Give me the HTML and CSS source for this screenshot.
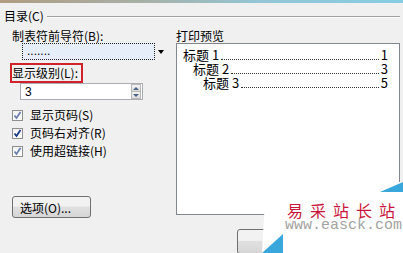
FILE: index.html
```html
<!DOCTYPE html>
<html lang="zh-CN">
<head>
  <meta charset="UTF-8">
  <title>目录</title>
  <link rel="stylesheet" href="styles.css">
</head>
<body>
  <div class="topbar"></div>
  <div class="dialog">
    <div class="group-title"><span>目录(C)</span><span class="rule"></span></div>

    <div class="columns">
      <div class="left">
        <div class="label">制表符前导符(B):</div>
        <div class="select-row">
          <div class="select">.......</div>
          <span class="arrow"></span>
        </div>

        <div class="label boxed">显示级别(L):</div>
        <div class="spin">
          <span class="spin-value">3</span>
          <div class="spin-btns">
            <span class="spin-up"></span>
            <span class="spin-down"></span>
          </div>
        </div>

        <div class="checks">
          <div class="check"><span class="box"><svg width="9" height="9" viewBox="0 0 9 9"><path d="M1.5 4.5 L3.5 7 L7.5 1" fill="none" stroke="#6b7fae" stroke-width="1.8"/></svg></span>显示页码(S)</div>
          <div class="check"><span class="box"><svg width="9" height="9" viewBox="0 0 9 9"><path d="M1.5 4.5 L3.5 7 L7.5 1" fill="none" stroke="#1c3a8c" stroke-width="1.8"/></svg></span>页码右对齐(R)</div>
          <div class="check"><span class="box"><svg width="9" height="9" viewBox="0 0 9 9"><path d="M1.5 4.5 L3.5 7 L7.5 1" fill="none" stroke="#6b7fae" stroke-width="1.8"/></svg></span>使用超链接(H)</div>
        </div>

        <button class="options">选项(O)...</button>
      </div>

      <div class="right">
        <div class="label">打印预览</div>
        <div class="preview">
          <div class="toc-row"><span>标题 1</span><span class="leader"></span><span>1</span></div>
          <div class="toc-row level2"><span>标题 2</span><span class="leader"></span><span>3</span></div>
          <div class="toc-row level3"><span>标题 3</span><span class="leader"></span><span>5</span></div>
        </div>
      </div>
    </div>

    <div class="footer">
      <button class="ok"></button>
    </div>
  </div>

  <!-- site watermark pasted over the corner -->
  <div class="watermark">
    <svg class="wm-bg" width="141" height="71" viewBox="0 0 141 71">
      <polygon points="4,0 141,0 141,71 0,71" fill="#ffffff"/>
      <polygon points="118,10 141,0 141,10" fill="#3aa7dc"/>
      <polygon points="0,71 21,52 21,71" fill="#3aa7dc"/>
    </svg>
    <div class="wm-title">易采站长站</div>
    <div class="wm-url">www.easck.com</div>
  </div>
</body>
</html>
```

FILE: styles.css
```css
* {
  box-sizing: border-box;
}

body {
  margin: 0;
  width: 403px;
  height: 253px;
  overflow: hidden;
  position: relative;
  background-color: #f0f0f0;
  font-family: "Noto Sans CJK SC", sans-serif;
  font-size: 12px;
  color: #000;
}

.topbar {
  height: 3px;
  background: linear-gradient(to right, #b09c82, #a7b0a6 35%, #93c6d6 65%, #86cde2);
}

.dialog {
  padding: 6px 0 0 4px;
}

.group-title {
  display: flex;
  align-items: center;
  height: 14px;
  line-height: 14px;
}

.group-title .rule {
  flex: 1;
  height: 1px;
  margin: 1px 3px 0 3px;
  background-color: #a0a0a0;
  box-shadow: 0 1px 0 #fff;
}

.columns {
  display: flex;
}

.left {
  width: 172px;
  padding-left: 8px;
}

.label {
  margin-top: 6px;
  height: 14px;
  line-height: 14px;
  white-space: nowrap;
}

.select-row {
  display: flex;
  align-items: center;
  margin-left: 10px;
  height: 17px;
}

.select {
  width: 133px;
  height: 17px;
  border: 1px dotted #222;
  background-color: #e6eefa;
  padding-left: 4px;
  line-height: 14px;
  font-family: "Liberation Sans", sans-serif;
  font-size: 12px;
}

.arrow {
  margin-left: 3px;
  width: 0;
  height: 0;
  border-left: 3px solid transparent;
  border-right: 3px solid transparent;
  border-top: 4px solid #000;
}

.boxed {
  margin-top: 3px;
  margin-left: -2px;
  width: 73px;
  height: 20px;
  line-height: 16px;
  border: 2px solid #d0222b;
}

.spin {
  display: flex;
  align-items: center;
  margin-left: 8px;
  width: 123px;
  height: 17px;
  border: 1px solid #abadb3;
  background-color: #fff;
}

.spin-value {
  flex: 1;
  padding-left: 4px;
  font-family: "Liberation Sans", sans-serif;
  font-size: 12px;
}

.spin-btns {
  display: flex;
  flex-direction: column;
  width: 10px;
  height: 15px;
  margin-right: 1px;
}

.spin-up,
.spin-down {
  flex: 1;
  display: flex;
  align-items: center;
  justify-content: center;
  background: linear-gradient(#f4f4f4, #dcdcdc);
  border: 1px solid #b8b8b8;
}

.spin-down {
  border-top: none;
}

.spin-up::after {
  content: "";
  border-left: 3px solid transparent;
  border-right: 3px solid transparent;
  border-bottom: 3px solid #4d6185;
}

.spin-down::after {
  content: "";
  border-left: 3px solid transparent;
  border-right: 3px solid transparent;
  border-top: 3px solid #4d6185;
}

.checks {
  margin-top: 6px;
}

.check {
  display: flex;
  align-items: center;
  height: 18px;
  line-height: 14px;
}

.check .box {
  display: flex;
  align-items: center;
  justify-content: center;
  width: 11px;
  height: 11px;
  margin-right: 7px;
  border: 1px solid #8e8f8f;
  background: linear-gradient(#f2f2f2, #ffffff);
}

.options {
  display: block;
  margin-top: 36px;
  width: 79px;
  height: 22px;
  padding: 0 0 0 7px;
  text-align: left;
  font-family: inherit;
  font-size: 12px;
  color: #000;
  border: 1px solid #707070;
  border-radius: 3px;
  background: linear-gradient(#f2f2f2 45%, #e0e0e0 50%, #d6d6d6);
}

.right {
  flex: 1;
}

.preview {
  width: 224px;
  height: 172px;
  border: 1px solid #828790;
  background-color: #fff;
  padding: 4px 11px 0 6px;
  font-size: 13px;
}

.toc-row {
  display: flex;
  align-items: baseline;
  height: 14px;
  line-height: 14px;
  white-space: nowrap;
}

.toc-row.level2 {
  padding-left: 10px;
}

.toc-row.level3 {
  padding-left: 20px;
}

.leader {
  flex: 1;
  margin: 0 2px;
  border-bottom: 1px dotted #333;
}

.footer {
  padding: 11px 0 0 233px;
}

.ok {
  display: block;
  width: 80px;
  height: 25px;
  border: 1px solid #707070;
  border-radius: 3px;
  background: linear-gradient(#f2f2f2 45%, #e0e0e0 50%, #d6d6d6);
}

.watermark {
  position: absolute;
  left: 262px;
  top: 182px;
  width: 141px;
  height: 71px;
}

.wm-bg {
  position: absolute;
  left: 0;
  top: 0;
}

.wm-title {
  position: relative;
  padding: 20px 0 0 25px;
  height: 36px;
  line-height: 16px;
  font-size: 16px;
  letter-spacing: 7px;
  white-space: nowrap;
  color: #c8143a;
}

.wm-url {
  position: relative;
  padding-left: 23px;
  line-height: 16px;
  font-family: "Liberation Mono", monospace;
  font-size: 15px;
  white-space: nowrap;
  color: #a3a3a3;
}
```
